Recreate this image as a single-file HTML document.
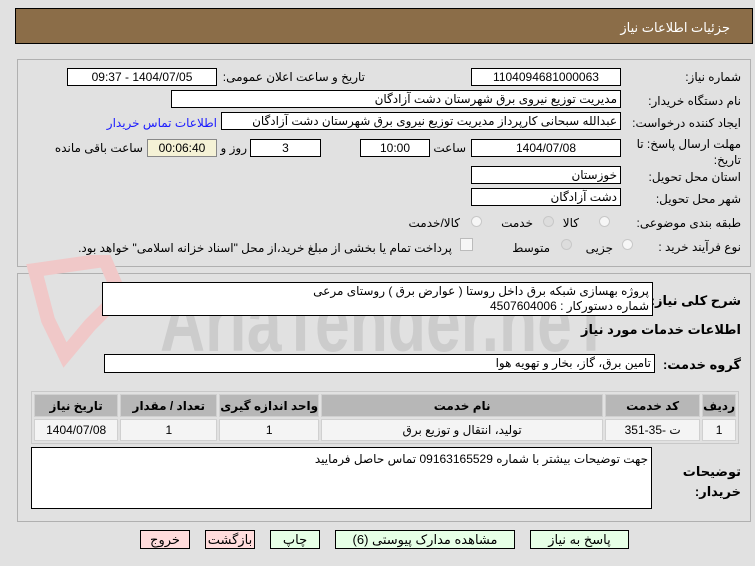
<!DOCTYPE html>
<html><head><meta charset="utf-8"><style>
body{margin:0;width:755px;height:566px;background:#e1e1e1;font-family:"Liberation Sans","DejaVu Sans",sans-serif;font-size:12px;color:#000;position:relative;overflow:hidden}
.a{position:absolute;white-space:nowrap}
.in{position:absolute;background:#fff;border:1px solid #000;box-sizing:border-box;height:18px;line-height:16px;padding:0 3px;direction:rtl;overflow:hidden;white-space:nowrap}
.c{text-align:center}
.l{position:absolute;direction:rtl;white-space:nowrap}
.panel{position:absolute;border:1px solid #b0b0b0;box-sizing:border-box}
.rad{position:absolute;width:11px;height:11px;border:1px solid #c8c8c8;border-radius:50%;background:#f6f6f6;box-sizing:border-box}
.btn{position:absolute;height:19px;border:1px solid #000;box-sizing:border-box;text-align:center;line-height:17px;font-size:13px}
.g{background:#e6ffe6}.p{background:#ffdcdc}
td{border:1px solid #d0d0d0;text-align:center;padding:0}
</style></head><body>
<div class="a" style="left:15px;top:8px;width:738px;height:36px;background:#8b6d48;border:1px solid #000;box-sizing:border-box"></div>
<div class="l" style="right:25px;top:20px;color:#fff;font-size:13px">جزئیات اطلاعات نیاز</div>

<div class="panel" style="left:17px;top:59px;width:734px;height:208px"></div>
<div class="l" style="right:14px;top:70px">شماره نیاز:</div>
<div class="in c" style="left:471px;top:68px;width:150px">1104094681000063</div>
<div class="l" style="right:390px;top:70px">تاریخ و ساعت اعلان عمومی:</div>
<div class="in c" style="left:67px;top:68px;width:150px">1404/07/05 - 09:37</div>
<div class="l" style="right:14px;top:94px">نام دستگاه خریدار:</div>
<div class="in" style="left:171px;top:90px;width:450px">مدیریت توزیع نیروی برق شهرستان دشت آزادگان</div>
<div class="l" style="right:14px;top:116px">ایجاد کننده درخواست:</div>
<div class="in" style="left:221px;top:112px;width:400px">عبدالله سبحانی کارپرداز مدیریت توزیع نیروی برق شهرستان دشت آزادگان</div>
<div class="l" style="right:538px;top:116px;color:#1a1aff">اطلاعات تماس خریدار</div>
<div class="l" style="right:14px;top:136px;line-height:16px">مهلت ارسال پاسخ: تا<br>تاریخ:</div>
<div class="in c" style="left:471px;top:139px;width:150px">1404/07/08</div>
<div class="l" style="right:289px;top:141px">ساعت</div>
<div class="in c" style="left:360px;top:139px;width:70px">10:00</div>
<div class="in c" style="left:250px;top:139px;width:71px">3</div>
<div class="l" style="right:508px;top:141px">روز و</div>
<div class="in c" style="left:147px;top:139px;width:70px;background:#f5f2d6;border-color:#888">00:06:40</div>
<div class="l" style="right:612px;top:141px">ساعت باقی مانده</div>
<div class="l" style="right:14px;top:170px">استان محل تحویل:</div>
<div class="in" style="left:471px;top:166px;width:150px">خوزستان</div>
<div class="l" style="right:14px;top:192px">شهر محل تحویل:</div>
<div class="in" style="left:471px;top:188px;width:150px">دشت آزادگان</div>
<div class="l" style="right:14px;top:216px">طبقه بندی موضوعی:</div>
<div class="rad" style="left:599px;top:216px"></div><div class="l" style="right:176px;top:216px">کالا</div>
<div class="rad" style="left:543px;top:216px;background:#ddd"></div><div class="l" style="right:222px;top:216px">خدمت</div>
<div class="rad" style="left:471px;top:216px"></div><div class="l" style="right:295px;top:216px">کالا/خدمت</div>
<div class="l" style="right:14px;top:240px">نوع فرآیند خرید :</div>
<div class="rad" style="left:622px;top:239px"></div><div class="l" style="right:142px;top:241px">جزیی</div>
<div class="rad" style="left:561px;top:239px;background:#ddd"></div><div class="l" style="right:205px;top:241px">متوسط</div>
<div class="a" style="left:460px;top:238px;width:11px;height:11px;border:1px solid #bbb;background:#f6f6f6"></div>
<div class="l" style="right:303px;top:241px">پرداخت تمام یا بخشی از مبلغ خرید،از محل "اسناد خزانه اسلامی" خواهد بود.</div>

<div class="panel" style="left:17px;top:273px;width:734px;height:249px"></div>
<svg class="a" style="left:20px;top:255px" width="590" height="130"><text x="140" y="96" font-size="84" font-family="Liberation Sans Narrow, Liberation Sans" font-weight="bold" fill="#cccccc" textLength="450" lengthAdjust="spacingAndGlyphs">AriaTender.neT</text><path d="M15 15 L85 5 L100 40 L70 70 L45 100 L28 65 Z" fill="none" stroke="#f0c8c8" stroke-width="14"/></svg>
<div class="l" style="right:14px;top:293px;font-weight:bold;font-size:13px">شرح کلی نیاز:</div>
<div class="in" style="left:102px;top:282px;width:551px;height:34px;line-height:15px;white-space:normal;padding-top:1px">پروژه بهسازی شبکه برق داخل روستا ( عوارض برق ) روستای مرعی<br>شماره دستورکار : 4507604006</div>
<div class="l" style="right:14px;top:322px;font-weight:bold;font-size:13px">اطلاعات خدمات مورد نیاز</div>
<div class="l" style="right:14px;top:357px;font-weight:bold;font-size:13px">گروه خدمت:</div>
<div class="in" style="left:104px;top:354px;width:551px;height:19px">تامین برق، گاز، بخار و تهویه هوا</div>
<table class="a" style="left:31px;top:391px;width:708px;border-collapse:separate;border-spacing:2px;background:#e1e1e1;border:1px solid #c8c8c8;direction:rtl;font-size:12px">
<tr style="background:#b7b7b7;font-weight:bold;height:23px"><td style="width:28px">ردیف</td><td style="width:93px">کد خدمت</td><td style="width:280px">نام خدمت</td><td style="width:94px">واحد اندازه گیری</td><td style="width:95px">تعداد / مقدار</td><td>تاریخ نیاز</td></tr>
<tr style="background:#f4f4f4;height:22px"><td>1</td><td>ت -35-351</td><td>تولید، انتقال و توزیع برق</td><td>1</td><td>1</td><td>1404/07/08</td></tr>
</table>
<div class="l" style="right:14px;top:462px;font-weight:bold;font-size:13px;line-height:20px">توضیحات<br>خریدار:</div>
<div class="in" style="left:31px;top:447px;width:621px;height:62px;padding-top:3px">جهت توضیحات بیشتر با شماره 09163165529 تماس حاصل فرمایید</div>

<div class="btn g" style="left:530px;top:530px;width:99px">پاسخ به نیاز</div>
<div class="btn g" style="left:335px;top:530px;width:180px">مشاهده مدارک پیوستی (6)</div>
<div class="btn g" style="left:270px;top:530px;width:50px">چاپ</div>
<div class="btn p" style="left:205px;top:530px;width:50px">بازگشت</div>
<div class="btn p" style="left:140px;top:530px;width:50px">خروج</div>
</body></html>
